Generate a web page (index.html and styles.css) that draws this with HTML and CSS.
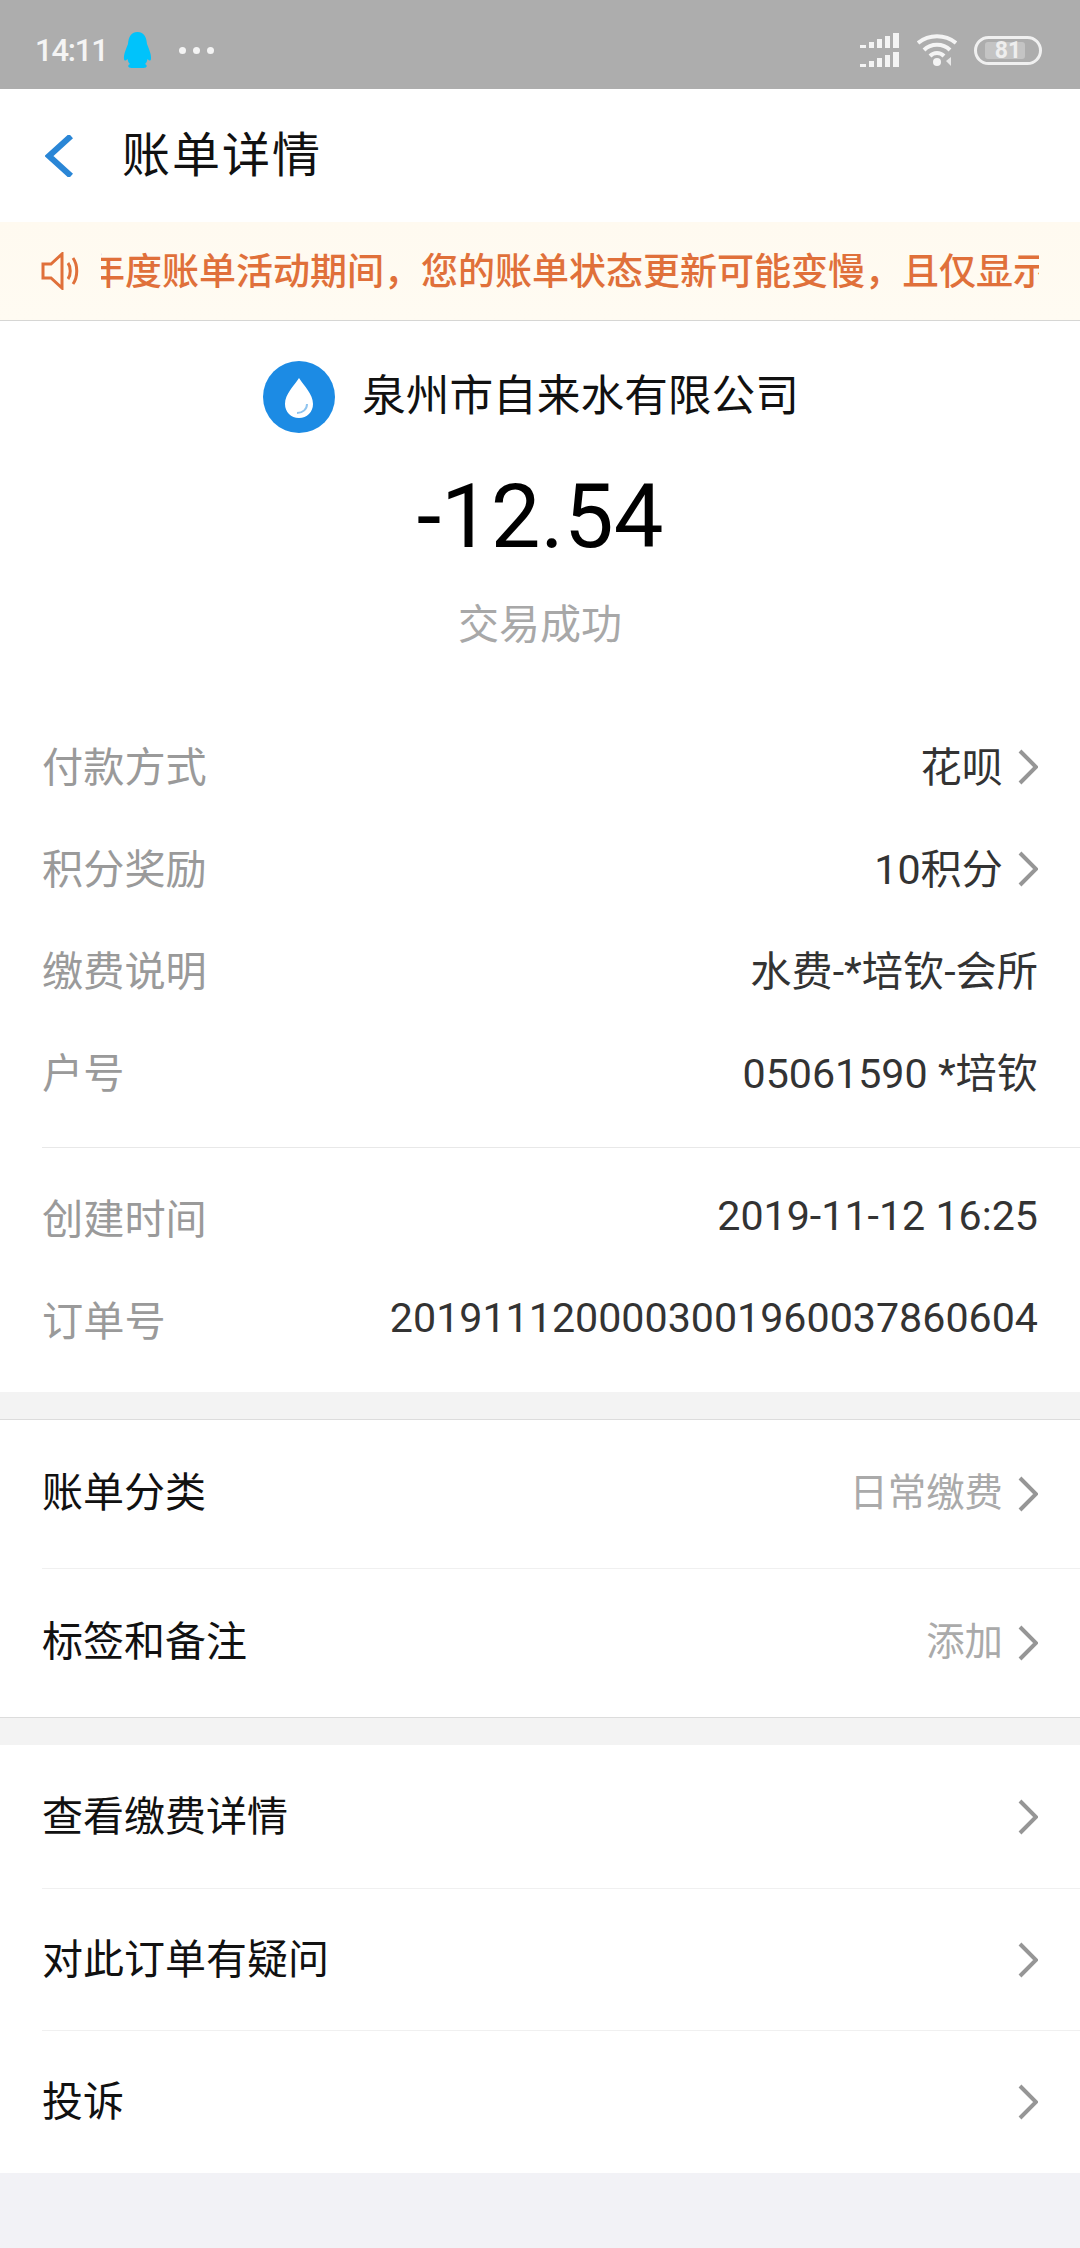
FILE: index.html
```html
<!DOCTYPE html>
<html lang="zh-CN">
<head>
<meta charset="utf-8">
<title>账单详情</title>
<link rel="stylesheet" href="styles.css">
</head>
<body>
<svg class="defs" width="0" height="0">
  <symbol id="chev" viewBox="0 0 20 36"><path d="M2 2 L18 18 L2 34" fill="none" stroke="currentColor" stroke-width="4"/></symbol>
</svg>
<div class="status">
  <div class="status-left">
    <span class="time">14:11</span>
    <svg class="qq" viewBox="0 0 30 36"><path d="M15 0C8 0 6 6 5.500 12C4 16 1 22 1.500 27C2 30 4 28 5 27C5.500 29 6 31 7.500 32C5 33 5 36 9 36H21C25 36 25 33 22.500 32C24 31 24.500 29 25 27C26 28 28 30 28.500 27C29 22 26 16 24.500 12C24 6 22 0 15 0Z" fill="#00c3fb"/></svg>
    <span class="dots"><i></i><i></i><i></i></span>
  </div>
  <div class="status-right">
    <svg class="signal" viewBox="0 0 41 34">
      <g fill="#f4f4f4">
        <rect x="0" y="12" width="6" height="3"/><rect x="9" y="9" width="5" height="6"/><rect x="17" y="6" width="5" height="9"/><rect x="25" y="3" width="5" height="12"/><rect x="33" y="0" width="6" height="15"/>
        <rect x="0" y="31" width="6" height="3"/><rect x="9" y="28" width="5" height="6"/><rect x="17" y="25" width="5" height="9"/><rect x="25" y="22" width="5" height="12"/><rect x="33" y="19" width="6" height="15"/>
      </g>
    </svg>
    <svg class="wifi" viewBox="0 0 40 34">
      <g fill="none" stroke="#f4f4f4" stroke-width="4">
        <path d="M1 10C12 1 28 1 39 10"/><path d="M7 17C14 10 26 10 33 17"/><path d="M13 23C17 19 23 19 27 23"/>
      </g>
      <circle cx="20" cy="29" r="4" fill="#f4f4f4"/>
      <path d="M34 24V33L29 28Z" fill="#e8e8e8"/>
    </svg>
    <div class="battery"><span class="battery-fill"></span><span class="battery-num">81</span></div>
  </div>
</div>

<header class="nav">
  <svg class="back" viewBox="0 0 28 42"><path d="M26 1L4 21L26 41" fill="none" stroke="#2a86d6" stroke-width="6"/></svg>
  <h1 class="title">账单详情</h1>
</header>

<div class="notice">
  <svg class="speaker" viewBox="0 0 40 38">
    <g fill="none" stroke="#e0703a" stroke-width="3">
      <path d="M2 12H10L21 2V36L10 26H2Z"/>
      <path d="M27 11C30 15 30 23 27 27"/>
      <path d="M32 6C37 13 37 25 32 32"/>
    </g>
  </svg>
  <div class="notice-clip"><span class="notice-text">年度账单活动期间，您的账单状态更新可能变慢，且仅显示</span></div>
</div>

<main class="card detail">
  <div class="summary">
    <div class="merchant">
      <svg class="logo" viewBox="0 0 72 72">
        <circle cx="36" cy="36" r="36" fill="#1c8be4"/>
        <path d="M36 17C31 25 22 33 22 43C22 51 28 57 36 57C44 57 50 51 50 43C50 33 41 25 36 17Z" fill="#fff"/>
        <path d="M34 52C40 52 44 48 44 43" fill="none" stroke="#8fc4ef" stroke-width="2"/>
      </svg>
      <span class="merchant-name">泉州市自来水有限公司</span>
    </div>
    <div class="amount">-12.54</div>
    <div class="state">交易成功</div>
  </div>

  <div class="rows">
    <div class="row"><span class="label">付款方式</span><span class="value"><span class="txt">花呗</span><svg class="chev"><use href="#chev"/></svg></span></div>
    <div class="row"><span class="label">积分奖励</span><span class="value"><span class="txt">10积分</span><svg class="chev"><use href="#chev"/></svg></span></div>
    <div class="row"><span class="label">缴费说明</span><span class="value"><span class="txt">水费-*培钦-会所</span></span></div>
    <div class="row"><span class="label">户号</span><span class="value"><span class="txt">05061590 *培钦</span></span></div>
  </div>
  <div class="rows rows-second">
    <div class="row"><span class="label">创建时间</span><span class="value"><span class="txt">2019-11-12 16:25</span></span></div>
    <div class="row"><span class="label">订单号</span><span class="value"><span class="txt">2019111200003001960037860604</span></span></div>
  </div>
</main>

<section class="card bordered">
  <div class="item"><span class="item-name">账单分类</span><span class="item-value"><span class="txt">日常缴费</span><svg class="chev"><use href="#chev"/></svg></span></div>
  <div class="item item-line"><span class="item-name">标签和备注</span><span class="item-value"><span class="txt">添加</span><svg class="chev"><use href="#chev"/></svg></span></div>
</section>

<section class="card plain">
  <div class="link"><span class="item-name">查看缴费详情</span><svg class="chev"><use href="#chev"/></svg></div>
  <div class="link link-line link-mid"><span class="item-name">对此订单有疑问</span><svg class="chev"><use href="#chev"/></svg></div>
  <div class="link link-line"><span class="item-name">投诉</span><svg class="chev"><use href="#chev"/></svg></div>
</section>
<div class="filler"></div>
</body>
</html>
```
FILE: styles.css
```css
* { box-sizing: border-box; }
html, body { margin: 0; padding: 0; }
body {
  width: 1080px;
  height: 2248px;
  overflow: hidden;
  background: #f3f3f3;
  font-family: Roboto, "Noto Sans CJK SC", sans-serif;
  color: #111;
}
.defs { display: block; height: 0; }

.status {
  height: 89px;
  background: #adadad;
  display: flex;
  justify-content: space-between;
  align-items: center;
  padding: 11px 38px 0 35px;
}
.status-left, .status-right { display: flex; align-items: center; }
.time { font-size: 31px; font-weight: 500; color: #f4f4f4; width: 87px; letter-spacing: -1.200px; }
.qq { width: 31px; height: 36px; }
.dots { display: flex; gap: 7px; margin-left: 26px; }
.dots i { width: 7px; height: 7px; border-radius: 50%; background: #f4f4f4; display: block; }
.signal { width: 41px; height: 34px; }
.wifi { width: 40px; height: 34px; margin-left: 16px; }
.battery {
  position: relative;
  width: 68px;
  height: 29px;
  margin-left: 17px;
  border: 3px solid #f0f0f0;
  border-radius: 15px;
  display: flex;
  align-items: center;
  justify-content: center;
  overflow: hidden;
}
.battery-fill { position: absolute; left: 8px; top: 3px; bottom: 3px; width: 40px; background: #c4c4c4; border-radius: 3px; }
.battery-num { position: relative; font-size: 23px; font-weight: 700; color: #eee; line-height: 1; }

.nav {
  height: 133px;
  background: #fff;
  display: flex;
  align-items: center;
  padding-left: 45px;
}
.back { width: 28px; height: 42px; }
.title { margin: 0 0 0 49px; font-size: 48px; font-weight: 400; color: #111; letter-spacing: 2px; line-height: 1; }

.notice {
  height: 99px;
  background: linear-gradient(#fffaf0, #fffbf2);
  border-bottom: 1px solid #d6d6d4;
  display: flex;
  align-items: center;
  padding: 0 35px 0 41px;
}
.speaker { width: 40px; height: 38px; flex: none; }
.notice-clip { margin-left: 20px; width: 938px; overflow: hidden; white-space: nowrap; padding-top: 4px; }
.notice-text { display: block; margin-left: -13px; font-size: 37px; font-weight: 500; line-height: 50px; color: #e0703a; }

.card { background: #fff; }
.detail { height: 1071px; padding-top: 40px; }
.summary { display: flex; flex-direction: column; align-items: center; height: 355px; }
.merchant { display: flex; align-items: center; height: 72px; padding-right: 18px; }
.logo { width: 72px; height: 72px; }
.merchant-name { margin-left: 27px; font-size: 43.700px; color: #111; padding-bottom: 10px; }
.amount { margin-top: 32px; font-size: 88.500px; line-height: 104px; color: #000; }
.state { margin-top: 28px; font-size: 41px; line-height: 56px; color: #a8a8a8; }

.rows { padding-left: 42px; }
.rows-second { margin: 23px 0 0 42px; padding: 20px 0 0; border-top: 1px solid #e8e8e8; }
.row {
  height: 102px;
  display: flex;
  justify-content: space-between;
  align-items: center;
  padding-right: 42px;
  font-size: 41.200px;
}
.label { color: #9a9a9a; padding-bottom: 6px; }
.value { color: #333; display: flex; align-items: center; }
.txt { padding-bottom: 6px; }
.chev { width: 20px; height: 36px; flex: none; color: #969696; }
.value .chev, .item-value .chev { margin-left: 15px; }

.bordered {
  margin-top: 27px;
  border-top: 1px solid #dcdcdc;
  border-bottom: 1px solid #dcdcdc;
  padding-left: 42px;
}
.item {
  height: 148px;
  display: flex;
  justify-content: space-between;
  align-items: center;
  padding-right: 42px;
}
.item-line { height: 149px; border-top: 1px solid #f0f0f0; }
.item-name { font-size: 41px; color: #111; padding-bottom: 10px; }
.item-value { font-size: 38.400px; color: #aaa; display: flex; align-items: center; }
.item-value .txt { padding-bottom: 10px; }

.plain { margin-top: 27px; padding-left: 42px; }
.link {
  height: 143px;
  display: flex;
  justify-content: space-between;
  align-items: center;
  padding-right: 42px;
}
.link .item-name { padding-bottom: 8px; }
.link-line { border-top: 1px solid #f0f0f0; }
.link-mid { height: 142px; }
.filler { height: 80px; background: #f2f2f6; }
```
